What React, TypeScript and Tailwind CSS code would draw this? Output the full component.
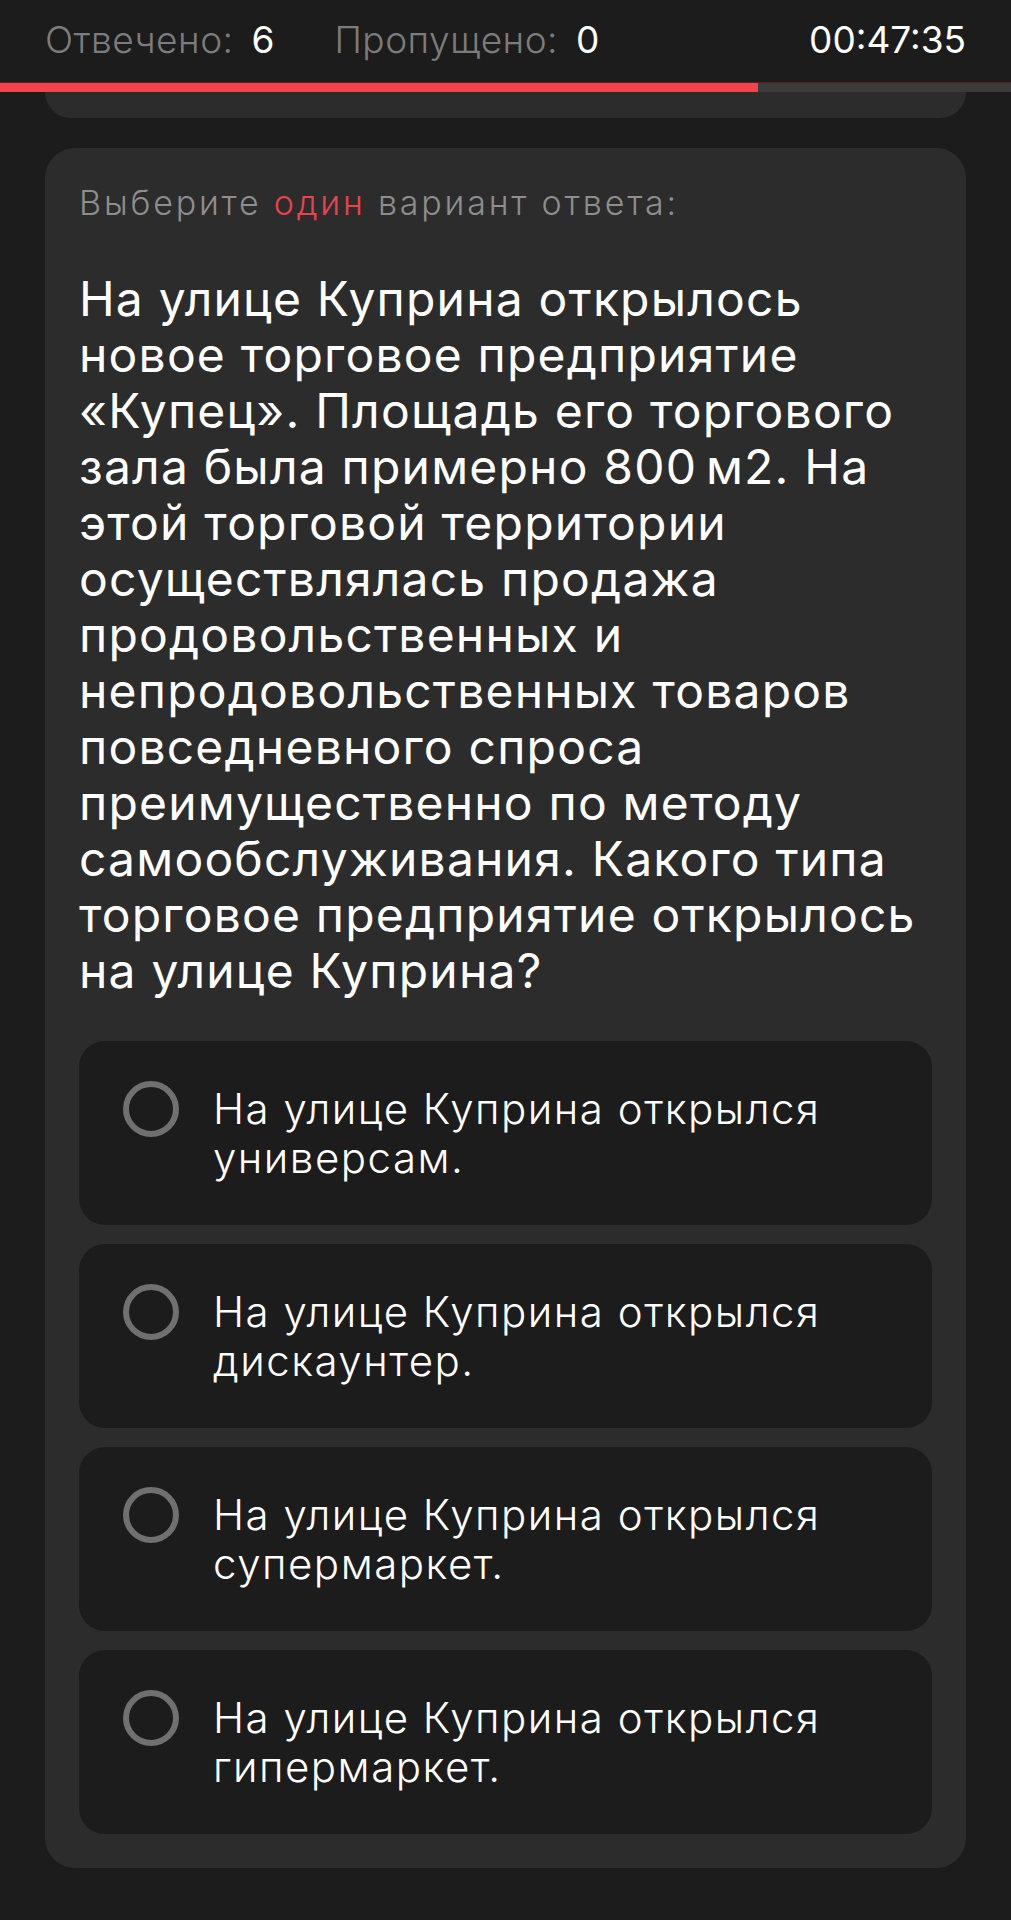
import React from 'react';

const options = [
  'На улице Куприна открылся универсам.',
  'На улице Куприна открылся дискаунтер.',
  'На улице Куприна открылся супермаркет.',
  'На улице Куприна открылся гипермаркет.',
];

const question =
  'На улице Куприна открылось новое торговое предприятие «Купец». Площадь его торгового зала была примерно 800\u202fм2. На этой торговой территории осуществлялась продажа продовольственных и непродовольственных товаров повседневного спроса преимущественно по методу самообслуживания. Какого типа торговое предприятие открылось на улице Куприна?';

const Radio: React.FC = () => (
  <div className="flex h-[49px] w-[56px] shrink-0 items-center justify-center">
    <div className="h-[56px] w-[56px] rounded-full border-[6px] border-[#707070]" />
  </div>
);

export default function App() {
  const answered = 6;
  const skipped = 0;
  const progress = 75;

  return (
    <div
      className="min-h-[1920px] w-full bg-[#1c1c1c] text-white"
      style={{ fontFamily: 'Inter, "Noto Sans", sans-serif' }}
    >
      <header className="flex h-[83px] items-center px-[45px] pb-[5px] text-[37px] leading-none">
        <span className="font-light tracking-[0.5px] text-[#7c7c7c]">Отвечено:</span>
        <span className="ml-[18px] text-white">{answered}</span>
        <span className="ml-[60px] font-light tracking-[0.5px] text-[#7c7c7c]">Пропущено:</span>
        <span className="ml-[18px] text-white">{skipped}</span>
        <span className="ml-auto text-white">00:47:35</span>
      </header>

      <div className="h-[9px] w-full bg-[#3b3b3b] shadow-[0_-1px_0_#5a1f22]">
        <div className="h-full bg-[#f2444d]" style={{ width: `${progress}%` }} />
      </div>

      <div className="mx-[45px] h-[26px] rounded-b-[30px] bg-[#2c2c2c]" />

      <main className="mx-[45px] mt-[30px] rounded-[30px] bg-[#2c2c2c] px-[34px] pb-[34px] pt-[34px]">
        <p className="text-[34px] font-light leading-[41px] tracking-[2.8px] text-[#8e8e8e]">
          Выберите <span className="text-[#ea434b]">один</span> вариант ответа:
        </p>

        <h1 className="mt-[48px] text-[48px] font-normal leading-[56px] tracking-[1.2px] text-white">
          {question}
        </h1>

        <div className="mt-[42px] flex flex-col gap-[19px]">
          {options.map((text) => (
            <button
              key={text}
              type="button"
              className="flex items-start gap-[34px] rounded-[26px] bg-[#1c1c1c] py-[43px] pl-[44px] pr-[30px] text-left"
            >
              <Radio />
              <span className="text-[42px] font-light leading-[49px] tracking-[1.5px] text-white">{text}</span>
            </button>
          ))}
        </div>
      </main>
    </div>
  );
}
